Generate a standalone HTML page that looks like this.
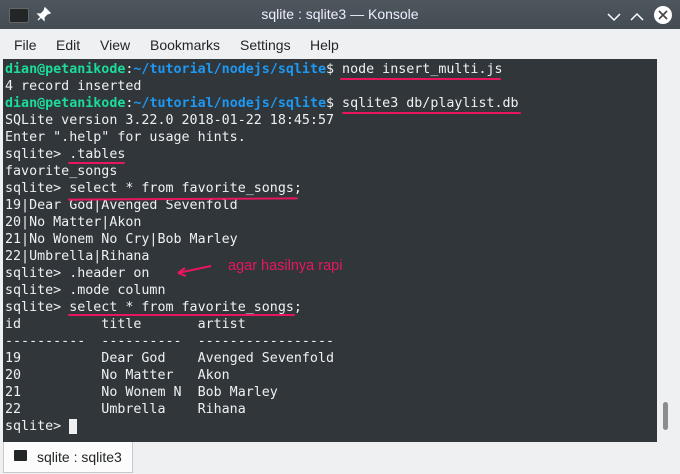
<!DOCTYPE html>
<html><head><style>
body{margin:0;width:680px;height:474px;overflow:hidden;background:#eff0f1;font-family:"Liberation Sans",sans-serif;position:relative}
#tb{position:absolute;left:0;top:0;width:680px;height:29px;background:linear-gradient(#4f575e,#444c53);color:#fff}
#tb .t{position:absolute;left:0;width:680px;top:6px;text-align:center;font-size:14px;color:#eef}
#menu{position:absolute;top:29px;left:0;height:30px;width:680px;font-size:14px;color:#232627}
#menu span{position:absolute;top:8px}
#term{position:absolute;left:3px;top:59px;width:654px;height:383px;background:#31363b}
pre{margin:0;position:absolute;left:5px;top:61px;font-family:"DejaVu Sans Mono","Liberation Mono",monospace;font-size:13.33px;line-height:17px;color:#eff0f1}
.g{color:#1cdc9a;font-weight:bold}.b{color:#1d99f3;font-weight:bold}
.u{position:absolute;height:2px;background:#e8175d;border-radius:1px}
#tab{position:absolute;left:3px;top:442px;width:128px;height:30px;background:#fcfcfc;border:1px solid #c8c9ca;border-top:none;font-size:14px}
</style></head><body>
<div id="tb">
<div style="position:absolute;left:9px;top:8px;width:18px;height:13px;background:#232627;border:1px solid #666;border-radius:2px"></div>
<svg style="position:absolute;left:36px;top:6px" width="16" height="16"><path d="M9 2l5 5-3 1-3 3v3l-6-6h3l3-3z M5 11l-3 3" stroke="#fff" fill="#fff" stroke-width="1.3"/></svg>
<div class="t">sqlite : sqlite3 — Konsole</div>
<svg style="position:absolute;left:600px;top:6px" width="80" height="20"><path d="M8 8l6 6 6-6M31 14l6-6 6 6" stroke="#fff" stroke-width="1.5" fill="none"/><circle cx="63" cy="9" r="9" fill="#fff"/><path d="M59 5l8 8M67 5l-8 8" stroke="#444" stroke-width="1.6"/></svg>
</div>
<div id="menu"><span style="left:14px">File</span><span style="left:56px">Edit</span><span style="left:100px">View</span><span style="left:150px">Bookmarks</span><span style="left:240px">Settings</span><span style="left:310px">Help</span></div>
<div id="term"></div>
<pre><span class="g">dian@petanikode</span>:<span class="b">~/tutorial/nodejs/sqlite</span>$ node insert_multi.js
4 record inserted
<span class="g">dian@petanikode</span>:<span class="b">~/tutorial/nodejs/sqlite</span>$ sqlite3 db/playlist.db
SQLite version 3.22.0 2018-01-22 18:45:57
Enter ".help" for usage hints.
sqlite> .tables
favorite_songs
sqlite> select * from favorite_songs;
19|Dear God|Avenged Sevenfold
20|No Matter|Akon
21|No Wonem No Cry|Bob Marley
22|Umbrella|Rihana
sqlite> .header on
sqlite> .mode column
sqlite> select * from favorite_songs;
id          title       artist
----------  ----------  -----------------
19          Dear God    Avenged Sevenfold
20          No Matter   Akon
21          No Wonem N  Bob Marley
22          Umbrella    Rihana
sqlite> <span style="background:#eff0f1">&nbsp;</span></pre>
<div class="u" style="left:340px;top:78px;width:161px"></div>
<div class="u" style="left:342px;top:112px;width:179px"></div>
<div class="u" style="left:68px;top:162px;width:57px"></div>
<div class="u" style="left:68px;top:198px;width:230px;transform:rotate(-0.3deg)"></div>
<div class="u" style="left:68px;top:314px;width:227px"></div>
<svg style="position:absolute;left:170px;top:261px" width="50" height="20"><path d="M41 5L8 12M8 12l7-5M8 12l8 3" stroke="#e8175d" stroke-width="2" fill="none"/></svg>
<div style="position:absolute;left:228px;top:258px;color:#e8175d;font-size:14.5px">agar hasilnya rapi</div>
<div style="position:absolute;left:663px;top:402px;width:5px;height:28px;background:#8a8d90;border-radius:3px"></div>
<div id="tab"><div style="position:absolute;left:10px;top:8px;width:13px;height:11px;background:#232627;border-radius:1px"></div><span style="position:absolute;left:33px;top:7px;color:#232627">sqlite : sqlite3</span></div>
</body></html>
